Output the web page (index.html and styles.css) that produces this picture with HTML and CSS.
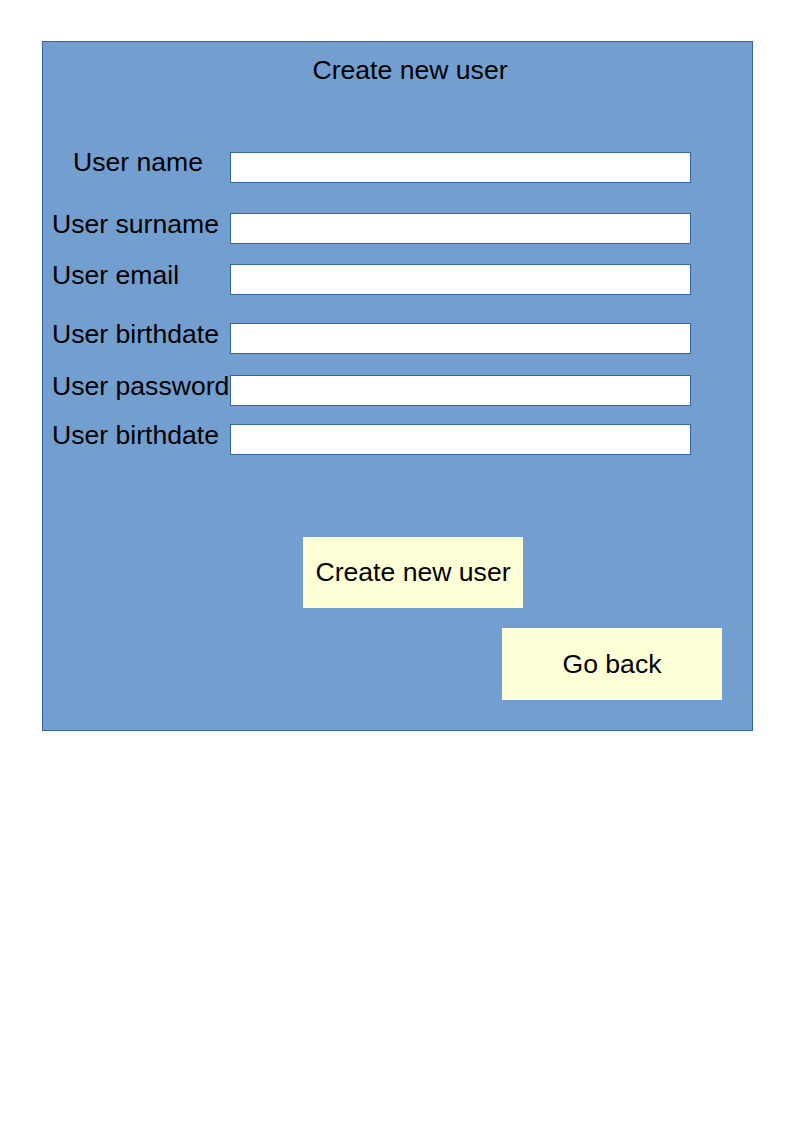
FILE: index.html
```html
<!DOCTYPE html>
<html>
<head>
<meta charset="utf-8">
<title>Create new user</title>
<link rel="stylesheet" href="styles.css">
</head>
<body>
<div class="panel">
  <div class="title">Create new user</div>
  <div class="row row-1"><label class="label label-indent">User name</label><input class="field" type="text"></div>
  <div class="row row-2"><label class="label">User surname</label><input class="field" type="text"></div>
  <div class="row row-3"><label class="label">User email</label><input class="field" type="text"></div>
  <div class="row row-4"><label class="label">User birthdate</label><input class="field" type="text"></div>
  <div class="row row-5"><label class="label">User password</label><input class="field" type="text"></div>
  <div class="row row-6"><label class="label">User birthdate</label><input class="field" type="text"></div>
  <button class="btn btn-create">Create new user</button>
  <button class="btn btn-back">Go back</button>
</div>
</body>
</html>
```
FILE: styles.css
```css
html, body {
  margin: 0;
  padding: 0;
  background: #ffffff;
}
body {
  font-family: "Liberation Sans", Arial, sans-serif;
  color: #000000;
}
.panel {
  box-sizing: border-box;
  margin: 41px 0 0 42px;
  width: 711px;
  height: 690px;
  background: #729fcf;
  border: 1px solid #3465a4;
  padding: 13px 0 30px 0;
  display: flex;
  flex-direction: column;
  align-items: flex-start;
}
.title {
  align-self: stretch;
  text-align: center;
  padding-left: 25px;
  font-size: 26.6px;
  line-height: 30px;
  height: 30px;
}
.row {
  display: flex;
  align-items: flex-start;
  padding-left: 9px;
}
.row-1 { margin-top: 67px; }
.row-2 { margin-top: 30px; }
.row-3 { margin-top: 20px; }
.row-4 { margin-top: 28px; }
.row-5 { margin-top: 21px; }
.row-6 { margin-top: 18px; }
.label {
  box-sizing: border-box;
  width: 178px;
  font-size: 26.6px;
  line-height: 30px;
  margin-top: -4px;
  white-space: nowrap;
}
.label-indent {
  padding-left: 21px;
  margin-top: -5px;
}
.field {
  box-sizing: border-box;
  width: 461px;
  height: 31px;
  margin: 0;
  padding: 0 4px;
  border: 1px solid #3465a4;
  background: #ffffff;
  outline: none;
}
.btn {
  box-sizing: border-box;
  width: 220px;
  height: 71px;
  border: none;
  margin: 0;
  padding: 0;
  background: #ffffd7;
  font-family: "Liberation Sans", Arial, sans-serif;
  font-size: 26.6px;
  color: #000000;
}
.btn-create {
  margin-top: 82px;
  margin-left: 260px;
}
.btn-back {
  margin-top: 20px;
  margin-left: 459px;
  height: 72px;
}
```
